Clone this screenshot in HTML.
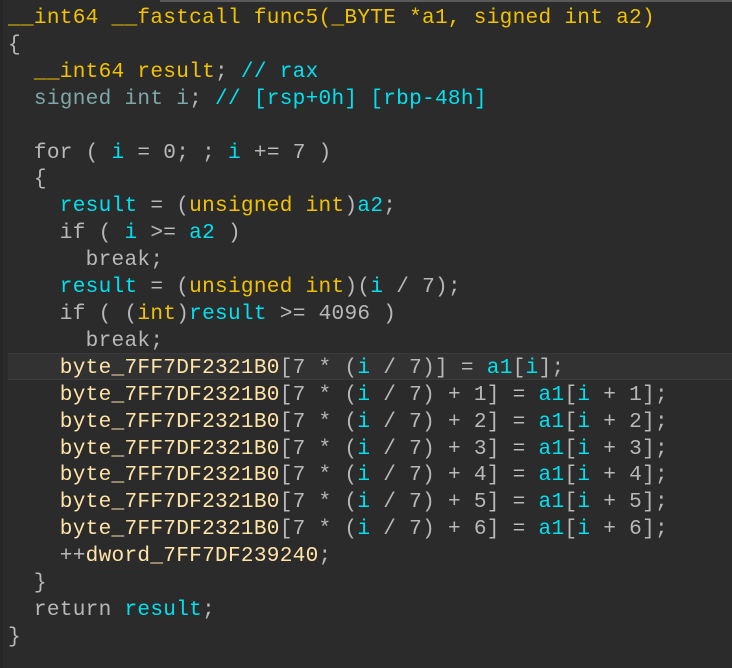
<!DOCTYPE html>
<html><head><meta charset="utf-8"><style>
html,body{margin:0;padding:0;background:#2b2b2b;width:732px;height:668px;overflow:hidden}
.top{position:absolute;left:160px;top:0;width:572px;height:2px;background:#5a5a5a}
.gut{position:absolute;left:0;top:0;width:3px;height:668px;background:#262626}
.hl{position:absolute;left:8px;top:353px;width:724px;height:27px;background:#323232;border-top:1px solid #3a3a3a;border-bottom:1px solid #3a3a3a;box-sizing:border-box}
pre{position:absolute;left:8px;top:5px;margin:0;font-family:"Liberation Mono",monospace;font-size:21.1px;letter-spacing:0.28px;line-height:26.9px;color:#b8b8b8;white-space:pre}
.y{color:#f2c200}.c{color:#00e1f0}.t{color:#7fa8a8}.b{color:#ffe4a8}
</style></head><body>
<div class="top"></div><div class="gut"></div><div class="hl"></div>
<pre><span class="y">__int64 __fastcall func5(_BYTE *a1, signed int a2)</span>
{
  <span class="y">__int64 result</span>; <span class="c">// rax</span>
  <span class="t">signed int i</span>; <span class="c">// [rsp+0h] [rbp-48h]</span>

  for ( <span class="c">i</span> = 0; ; <span class="c">i</span> += 7 )
  {
    <span class="c">result</span> = (<span class="y">unsigned int</span>)<span class="c">a2</span>;
    if ( <span class="c">i</span> &gt;= <span class="c">a2</span> )
      break;
    <span class="c">result</span> = (<span class="y">unsigned int</span>)(<span class="c">i</span> / 7);
    if ( (<span class="y">int</span>)<span class="c">result</span> &gt;= 4096 )
      break;
    <span class="b">byte_7FF7DF2321B0</span>[7 * (<span class="c">i</span> / 7)] = <span class="c">a1</span>[<span class="c">i</span>];
    <span class="b">byte_7FF7DF2321B0</span>[7 * (<span class="c">i</span> / 7) + 1] = <span class="c">a1</span>[<span class="c">i</span> + 1];
    <span class="b">byte_7FF7DF2321B0</span>[7 * (<span class="c">i</span> / 7) + 2] = <span class="c">a1</span>[<span class="c">i</span> + 2];
    <span class="b">byte_7FF7DF2321B0</span>[7 * (<span class="c">i</span> / 7) + 3] = <span class="c">a1</span>[<span class="c">i</span> + 3];
    <span class="b">byte_7FF7DF2321B0</span>[7 * (<span class="c">i</span> / 7) + 4] = <span class="c">a1</span>[<span class="c">i</span> + 4];
    <span class="b">byte_7FF7DF2321B0</span>[7 * (<span class="c">i</span> / 7) + 5] = <span class="c">a1</span>[<span class="c">i</span> + 5];
    <span class="b">byte_7FF7DF2321B0</span>[7 * (<span class="c">i</span> / 7) + 6] = <span class="c">a1</span>[<span class="c">i</span> + 6];
    ++<span class="b">dword_7FF7DF239240</span>;
  }
  return <span class="c">result</span>;
}</pre>
</body></html>
